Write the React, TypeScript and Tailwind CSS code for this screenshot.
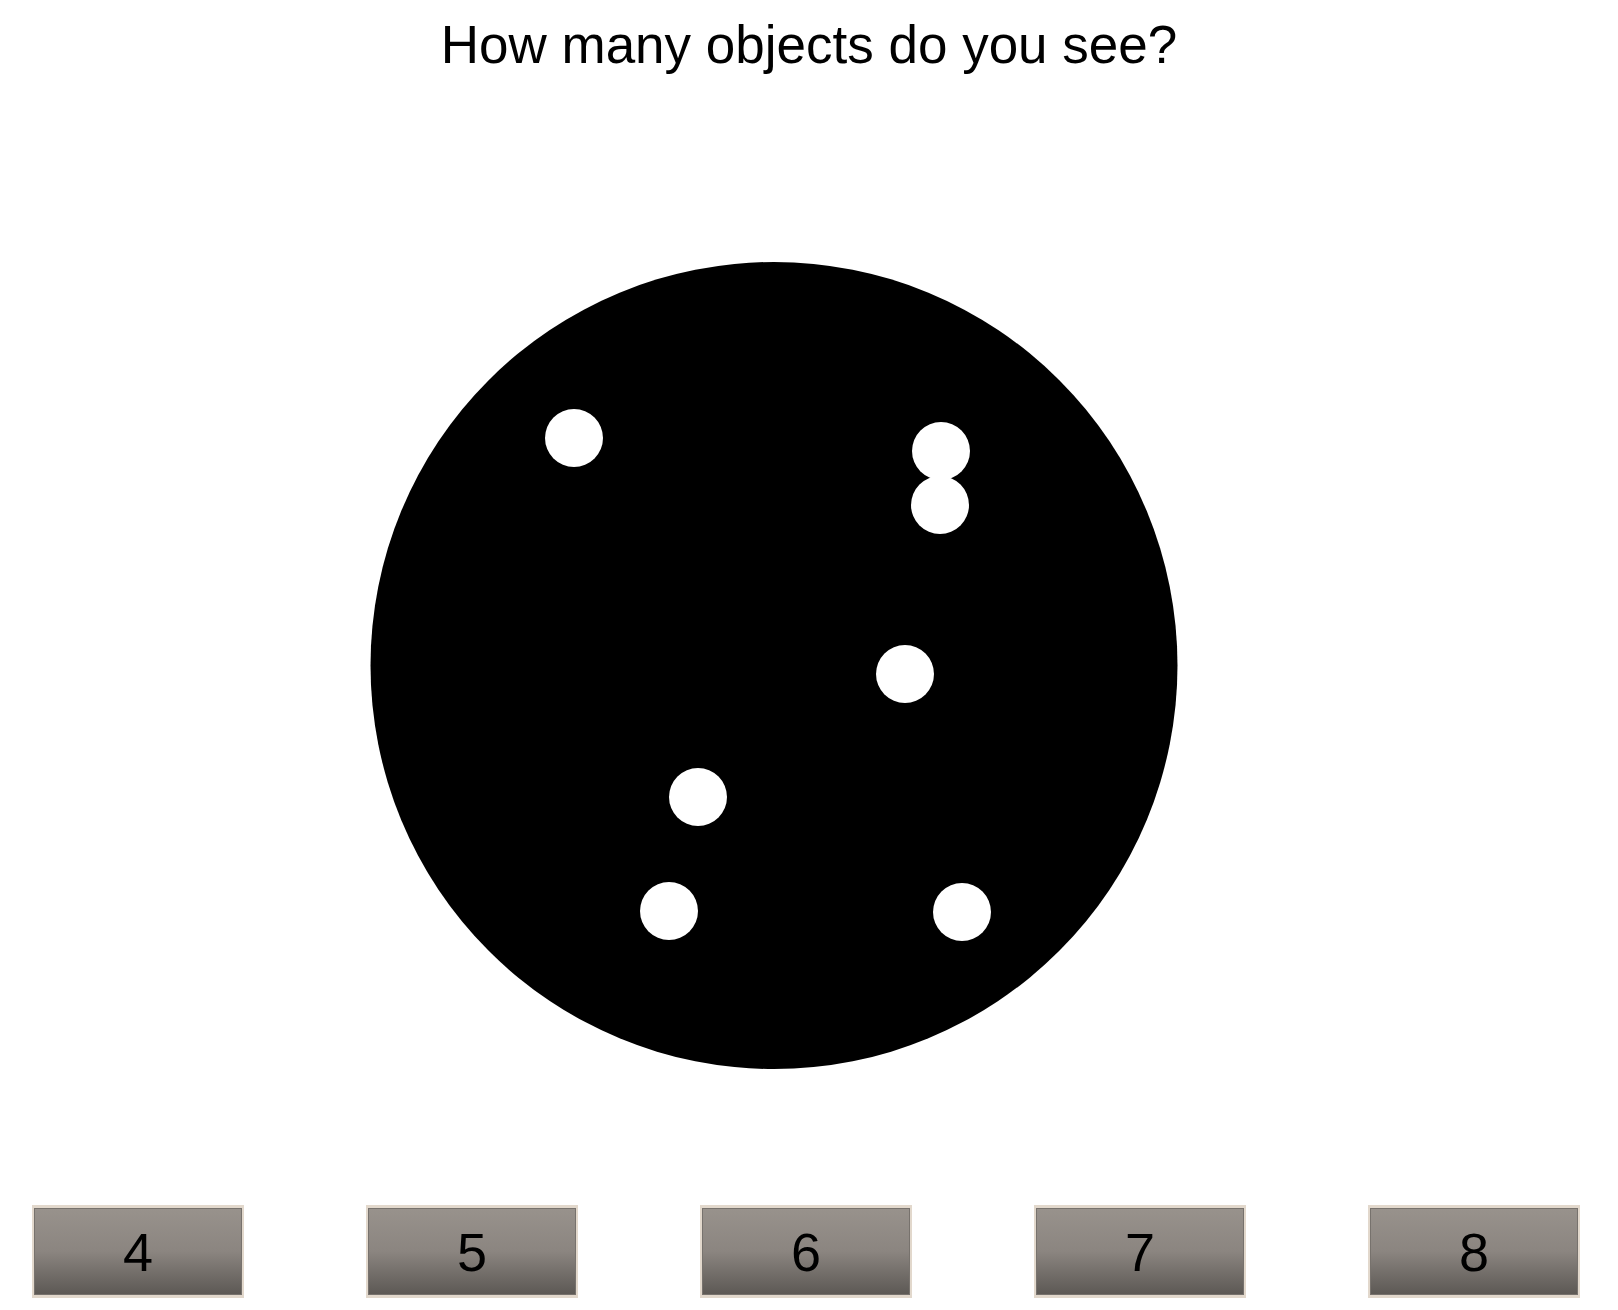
const dots = [
  { x: 204, y: 176 },
  { x: 571, y: 189 },
  { x: 570, y: 243 },
  { x: 535, y: 412 },
  { x: 328, y: 535 },
  { x: 299, y: 649 },
  { x: 592, y: 650 },
]

const choices = [4, 5, 6, 7, 8]

function Stimulus() {
  return (
    <svg width={808} height={808} viewBox="0 0 808 808" className="block">
      <circle cx={404} cy={403.5} r={403.5} fill="#000" />
      {dots.map((d, i) => (
        <circle key={i} cx={d.x} cy={d.y} r={29} fill="#fff" />
      ))}
    </svg>
  )
}

function ChoiceButton({ value }: { value: number }) {
  return (
    <button className="h-[93px] w-[212px] cursor-pointer border-x-2 border-y-[3px] border-[#e2d8cc] bg-[#e2d8cc] p-0">
      <div className="flex h-full w-full items-center justify-center border border-[#77726d] bg-linear-to-b from-[#98928c] via-[#8b8580] to-[#5d5955] text-[54px] leading-none text-black">
        {value}
      </div>
    </button>
  )
}

export default function App() {
  return (
    <div className="flex h-[1310px] w-full flex-col bg-white font-['Liberation_Sans',Arial,sans-serif]">
      <h1 className="pt-[18px] text-center text-[53px] leading-none font-normal text-black">
        How many objects do you see?
      </h1>
      <div className="mt-[191px] pl-[370px]">
        <Stimulus />
      </div>
      <div className="mt-[135px] flex gap-[122px] pl-[32px]">
        {choices.map((c) => (
          <ChoiceButton key={c} value={c} />
        ))}
      </div>
    </div>
  )
}
